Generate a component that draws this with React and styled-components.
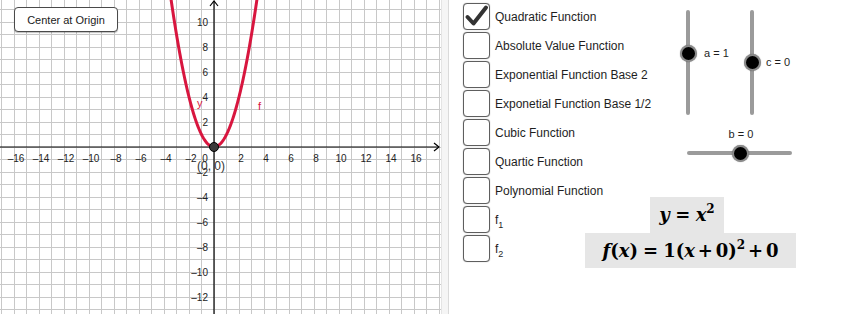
import React from 'react';
import styled, { createGlobalStyle } from 'styled-components';

const GlobalStyle = createGlobalStyle`
  html, body { margin: 0; padding: 0; background: #fff; }
  body { font-family: "Liberation Sans", Arial, sans-serif; }
  * { box-sizing: border-box; }
`;

const Applet = styled.div`
  display: flex;
  width: 859px;
  height: 314px;
  overflow: hidden;
  background: #fff;
`;

const GraphView = styled.div`
  position: relative;
  width: 441px;
  height: 314px;
  flex: none;
  overflow: hidden;
`;

const Divider = styled.div`
  width: 8px;
  flex: none;
  background: #f5f5f5;
  border-left: 1px solid #e4e4e4;
  border-right: 1px solid #dadada;
`;

const RightView = styled.div`
  position: relative;
  flex: 1;
  padding: 2px 0 0 14px;
`;

const CenterButton = styled.button`
  position: absolute;
  left: 14px;
  top: 7px;
  width: 104px;
  height: 25px;
  padding: 0;
  background: #fff;
  border: 1px solid #4a4a4a;
  border-radius: 4px;
  box-shadow: 0 1px 1px rgba(0, 0, 0, 0.25);
  font: 11px "Liberation Sans", Arial, sans-serif;
  color: #1a1a1a;
`;

const CheckList = styled.div`
  display: flex;
  flex-direction: column;
`;

const CheckRow = styled.div`
  display: flex;
  align-items: center;
  height: 29px;
  gap: 5px;
`;

const Box = styled.div`
  width: 27px;
  height: 27px;
  flex: none;
  border: 1px solid #5e5e5e;
  border-radius: 4px;
  box-shadow: 0 0 1px rgba(0, 0, 0, 0.45);
  background: #fff;
  display: flex;
  align-items: center;
  justify-content: center;
`;

const CheckLabel = styled.span`
  font-size: 12px;
  color: #1e1e1e;
  white-space: nowrap;
  sub {
    font-size: 9px;
    vertical-align: -4px;
    line-height: 0;
  }
`;

const SliderBody = styled.div`
  position: absolute;
  left: ${p => p.$x}px;
  top: ${p => p.$y}px;
  width: ${p => (p.$vertical ? 4 : p.$len)}px;
  height: ${p => (p.$vertical ? p.$len : 4)}px;
  background: #9b9b9b;
  border-radius: 2px;
`;

const Knob = styled.div`
  position: absolute;
  width: 17px;
  height: 17px;
  margin: -8.5px 0 0 -8.5px;
  border-radius: 50%;
  background: #000;
  border: 2.5px solid #8a8a8a;
  box-shadow: 0 0 1px rgba(0, 0, 0, 0.5);
`;

const SliderLabel = styled.span`
  position: absolute;
  left: ${p => p.$x}px;
  top: ${p => p.$y}px;
  transform: translate(${p => (p.$center ? '-50%' : '0')}, -50%);
  font-size: 11px;
  color: #1e1e1e;
  white-space: nowrap;
`;

const EquationStack = styled.div`
  position: absolute;
  left: 136px;
  top: 197px;
  width: 211px;
  display: flex;
  flex-direction: column;
  align-items: center;
`;

const EqBox = styled.div`
  background: #e6e6e6;
  height: ${p => p.$h}px;
  width: ${p => p.$w}px;
  margin-right: ${p => p.$shift || 0}px;
  display: flex;
  align-items: center;
  justify-content: center;
`;

const EqText = styled.span`
  font-family: "DejaVu Serif", "Liberation Serif", serif;
  font-weight: bold;
  font-size: 18px;
  line-height: 1;
  color: #000;
  white-space: nowrap;
  sup {
    font-size: 12px;
    vertical-align: 8px;
    line-height: 0;
  }
`;

const V = styled.i`
  font-style: italic;
`;

const Op = styled.span`
  margin: 0 ${p => p.$gap}em;
`;

const OX = 214;
const OY = 147;
const U = 12.5;
const W = 441;
const H = 314;
const snap = v => Math.round(v) + 0.5;

function Graph() {
  const vLines = [];
  for (let k = -17; k <= 18; k++) vLines.push(snap(OX + k * U - 0.5));
  const hLines = [];
  for (let k = -11; k <= 13; k++) hLines.push(snap(OY + k * U - 0.5));

  const xLabels = [];
  for (let k = -16; k <= 16; k += 2) if (k !== 0) xLabels.push(k);
  const yLabels = [];
  for (let k = -12; k <= 10; k += 2) if (k !== 0) yLabels.push(k);

  const pts = [];
  for (let x = -3.5; x <= 3.5001; x += 0.05) {
    pts.push(`${(OX + x * U).toFixed(2)},${(OY - x * x * U).toFixed(2)}`);
  }

  const fmt = n => (n < 0 ? `\u2013${-n}` : `${n}`);

  return (
    <svg width={W} height={H} viewBox={`0 0 ${W} ${H}`} style={{ display: 'block' }}>
      <rect width={W} height={H} fill="#fff" />
      <g stroke="#c8c8c8" strokeWidth="1">
        {vLines.map((x, i) => (
          <line key={`v${i}`} x1={x} y1={0} x2={x} y2={H} />
        ))}
        {hLines.map((y, i) => (
          <line key={`h${i}`} x1={0} y1={y} x2={W} y2={y} />
        ))}
      </g>
      <g stroke="#000" strokeWidth="1.2" fill="none">
        <line x1={0} y1={OY} x2={439} y2={OY} />
        <line x1={OX} y1={1} x2={OX} y2={H} />
        <polyline points={`${434},${OY - 4} ${439},${OY} ${434},${OY + 4}`} />
        <polyline points={`${OX - 4},${6} ${OX},${1} ${OX + 4},${6}`} />
      </g>
      <g fontFamily="Liberation Sans, Arial, sans-serif" fontSize="10" fill="#222">
        {xLabels.map(k => (
          <text key={`lx${k}`} x={OX + k * U + 2} y={OY + 14.5} textAnchor="middle">
            {fmt(k)}
          </text>
        ))}
        <text x={205} y={OY + 14.5} textAnchor="middle">0</text>
        {yLabels.map(k => (
          <text key={`ly${k}`} x={208} y={OY - k * U + 3.5} textAnchor="end">
            {fmt(k)}
          </text>
        ))}
      </g>
      <polyline
        points={pts.join(' ')}
        fill="none"
        stroke="#d8163f"
        strokeWidth="3"
        strokeLinejoin="round"
      />
      <circle cx={OX} cy={OY} r={4.5} fill="#3a3a3a" stroke="#000" strokeWidth="1" />
      <g fontFamily="Liberation Sans, Arial, sans-serif" fontSize="11" fill="#d8163f">
        <text x={197} y={107}>y</text>
        <text x={258} y={110}>f</text>
      </g>
      <text
        x={197}
        y={170}
        fontFamily="Liberation Sans, Arial, sans-serif"
        fontSize="12"
        fill="#333"
      >
        (0, 0)
      </text>
    </svg>
  );
}

function CheckMark() {
  return (
    <svg width="25" height="25" viewBox="0 0 25 25">
      <path
        d="M3.5 13 L9.5 19.5 L22 3.5"
        fill="none"
        stroke="#333"
        strokeWidth="4"
        strokeLinecap="round"
        strokeLinejoin="round"
      />
    </svg>
  );
}

const checks = [
  { label: 'Quadratic Function', checked: true },
  { label: 'Absolute Value Function' },
  { label: 'Exponential Function Base 2' },
  { label: 'Exponetial Function Base 1/2' },
  { label: 'Cubic Function' },
  { label: 'Quartic Function' },
  { label: 'Polynomial Function' },
  { label: 'f', sub: '1' },
  { label: 'f', sub: '2' },
];

function Slider({ x, y, len, vertical, pos }) {
  return (
    <SliderBody $x={x} $y={y} $len={len} $vertical={vertical}>
      <Knob style={vertical ? { left: 2, top: pos } : { left: pos, top: 2 }} />
    </SliderBody>
  );
}

export default function App() {
  return (
    <>
      <GlobalStyle />
      <Applet>
        <GraphView>
          <Graph />
          <CenterButton>Center at Origin</CenterButton>
        </GraphView>
        <Divider />
        <RightView>
          <CheckList>
            {checks.map((c, i) => (
              <CheckRow key={i}>
                <Box>{c.checked && <CheckMark />}</Box>
                <CheckLabel>
                  {c.label}
                  {c.sub && <sub>{c.sub}</sub>}
                </CheckLabel>
              </CheckRow>
            ))}
          </CheckList>

          <Slider x={237} y={10} len={105} vertical pos={43} />
          <SliderLabel $x={255} $y={53}>a = 1</SliderLabel>

          <Slider x={301} y={10} len={105} vertical pos={52} />
          <SliderLabel $x={317} $y={62}>c = 0</SliderLabel>

          <SliderLabel $x={292} $y={134} $center>b = 0</SliderLabel>
          <Slider x={238} y={151} len={105} pos={53} />

          <EquationStack>
            <EqBox $w={74} $h={36} $shift={7}>
              <EqText>
                <V>y</V>
                <Op $gap={0.3}>=</Op>
                <V>x</V>
                <sup>2</sup>
              </EqText>
            </EqBox>
            <EqBox $w={211} $h={35}>
              <EqText>
                <V>f</V>(<V>x</V>)
                <Op $gap={0.28}>=</Op>
                1(<V>x</V>
                <Op $gap={0.16}>+</Op>
                0)<sup>2</sup>
                <Op $gap={0.16}>+</Op>
                0
              </EqText>
            </EqBox>
          </EquationStack>
        </RightView>
      </Applet>
    </>
  );
}
